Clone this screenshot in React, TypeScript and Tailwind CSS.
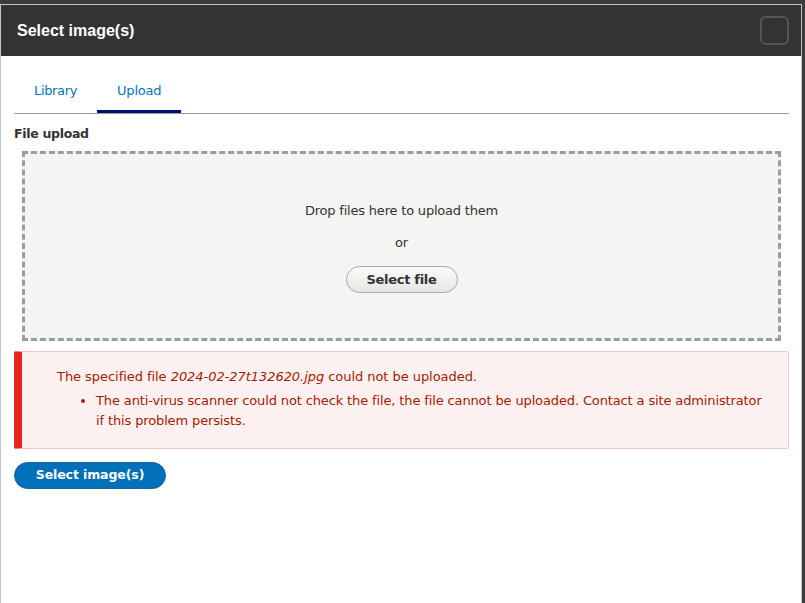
import React from "react";

export default function App() {
  const ui = { fontFamily: '"DejaVu Sans", Verdana, sans-serif' };
  return (
    <div className="w-[805px] h-[603px] bg-[#3c3c3c] pt-[4px] overflow-hidden">
      <div className="w-[802px] h-[600px] border border-[#c4c4c4] bg-white flex flex-col" style={ui}>
        <div className="h-[51px] bg-[#333333] flex items-center justify-between pl-[16px] pr-[12px] shrink-0">
          <span
            className="text-white font-bold text-[16px]"
            style={{ fontFamily: '"Liberation Sans", Arial, sans-serif' }}
          >
            Select image(s)
          </span>
          <div className="w-[29px] h-[29px] border-2 border-[#555555] rounded-[6px]" />
        </div>
        <div className="pl-[13px] pr-[12px] flex flex-col">
          <div className="h-[58px] border-b border-[#9a9a9a] flex items-end">
            <div className="relative h-[46px] pt-[2px] px-[20px] flex items-center text-[13px] tracking-[-0.35px] text-[#0074bd]">
              Library
            </div>
            <div className="relative h-[46px] pt-[2px] px-[20px] flex items-center text-[13px] tracking-[-0.2px] text-[#0074bd]">
              Upload
              <div className="absolute left-0 right-0 bottom-0 h-[3px] bg-[#000c78]" />
            </div>
          </div>
          <div className="mt-[10px] leading-[20px] text-[12.5px] font-bold text-[#333] tracking-[-0.3px]">
            File upload
          </div>
          <div className="mt-[7px] mx-[8px] h-[190px] border-[3px] border-dashed border-[#9c9c9c] bg-[#f4f4f2] flex flex-col items-center pt-[47px] text-[13px] tracking-[-0.2px] text-[#333]">
            <div className="leading-[20px]">Drop files here to upload them</div>
            <div className="leading-[20px] mt-[12px]">or</div>
            <button className="mt-[13px] w-[112px] h-[27px] rounded-full border border-[#a8a8a8] bg-gradient-to-b from-[#fafafa] to-[#e6e6e4] text-[13px] font-bold text-[#333] tracking-[-0.3px] leading-none">
              Select file
            </button>
          </div>
          <div className="mt-[10px] h-[98px] border border-[#f2c9c6] border-l-[8px] border-l-[#e7261c] rounded-[2px] bg-[#fcf1f0] pt-[15px] pl-[35px] pr-[20px] text-[13px] text-[#a51b00] leading-[20px]">
            <div className="tracking-[-0.05px]">
              The specified file <em>2024-02-27t132620.jpg</em> could not be uploaded.
            </div>
            <ul className="mt-[4px] ml-[39px] list-disc tracking-[-0.13px]">
              <li>
                The anti-virus scanner could not check the file, the file cannot be uploaded. Contact a site administrator if this problem persists.
              </li>
            </ul>
          </div>
          <div className="mt-[13px]">
            <button className="w-[152px] h-[27px] rounded-full bg-[#0071b8] border border-[#1565a0] text-white text-[12.5px] font-bold tracking-[-0.1px] leading-none">
              Select image(s)
            </button>
          </div>
        </div>
      </div>
    </div>
  );
}
